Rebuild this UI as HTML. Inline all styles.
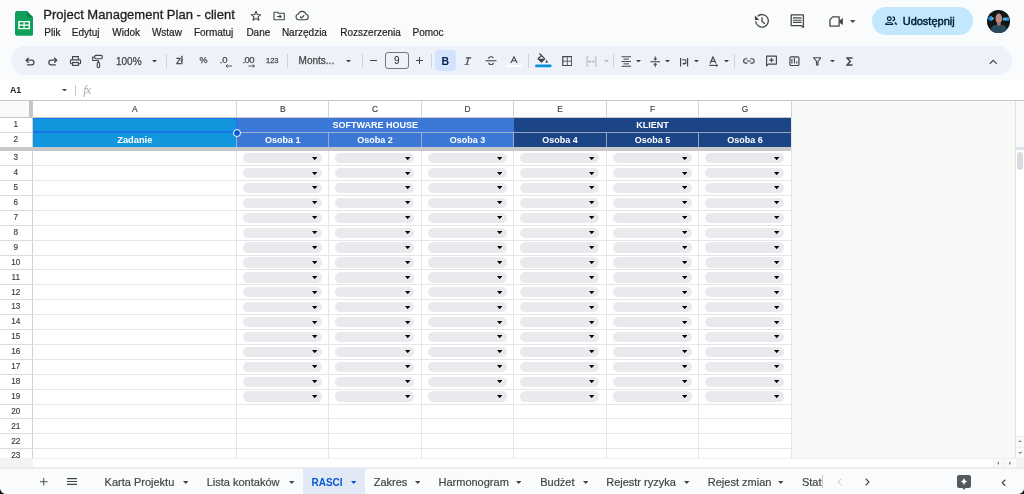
<!DOCTYPE html><html><head><meta charset="utf-8"><style>html,body{margin:0;padding:0;background:#f9fbfd;overflow:hidden;width:1024px;height:494px;}#r{will-change:transform;position:absolute;left:0;top:0;width:1024px;height:494px;overflow:hidden;background:#f9fbfd;}</style></head><body><div id="r">
<svg style="position:absolute;left:15.00px;top:11.00px;" width="18.2" height="24.8" viewBox="0 0 18.2 24.8"><path d="M2 0H11.8L18.2 6.4V22.8A2 2 0 0 1 16.2 24.8H2A2 2 0 0 1 0 22.8V2A2 2 0 0 1 2 0Z" fill="#0fa15a"/><path d="M11.8 0L18.2 6.4H13.8A2 2 0 0 1 11.8 4.4Z" fill="#0b8043"/><path d="M3.2 10H15V18.2H3.2Z" fill="#fff"/><path d="M4.6 11.3H8.5V13.5H4.6ZM9.7 11.3H13.6V13.5H9.7ZM4.6 14.7H8.5V16.9H4.6ZM9.7 14.7H13.6V16.9H9.7Z" fill="#0fa15a"/></svg>
<div style="position:absolute;left:43.30px;top:7.90px;font:normal 13px/13px 'Liberation Sans', sans-serif;color:#1f1f1f;white-space:nowrap;-webkit-text-stroke:0.3px #1f1f1f;">Project Management Plan - client</div>
<svg style="position:absolute;left:250.00px;top:10.00px;" width="12" height="11.5" viewBox="0 0 24 23"><path d="M12 2.5l2.6 6.4 6.9.5-5.3 4.4 1.7 6.7L12 16.8l-5.9 3.7 1.7-6.7L2.5 9.4l6.9-.5Z" fill="none" stroke="#444746" stroke-width="2.2" stroke-linejoin="round"/></svg>
<svg style="position:absolute;left:272.50px;top:10.50px;" width="12.5" height="10" viewBox="0 0 25 20"><path d="M2 2.5h7l2 2h11.5v13H2Z" fill="none" stroke="#444746" stroke-width="2.2" stroke-linejoin="round"/><path d="M8 11h8M13 7.8l3.2 3.2L13 14.2" fill="none" stroke="#444746" stroke-width="2.2"/></svg>
<svg style="position:absolute;left:294.50px;top:10.00px;" width="14" height="10.5" viewBox="0 0 28 21"><path d="M7.5 19.5A5.8 5.8 0 0 1 6.8 8 8 8 0 0 1 22 8.6 5.5 5.5 0 0 1 21.5 19.5Z" fill="none" stroke="#444746" stroke-width="2.2" stroke-linejoin="round"/><path d="M10 13l3 3 5.5-5.5" fill="none" stroke="#444746" stroke-width="2.2"/></svg>
<div style="position:absolute;left:44.30px;top:28.14px;font:normal 10px/10px 'Liberation Sans', sans-serif;color:#1f1f1f;white-space:nowrap;-webkit-text-stroke:0.2px #1f1f1f;">Plik</div>
<div style="position:absolute;left:71.80px;top:28.14px;font:normal 10px/10px 'Liberation Sans', sans-serif;color:#1f1f1f;white-space:nowrap;-webkit-text-stroke:0.2px #1f1f1f;">Edytuj</div>
<div style="position:absolute;left:112.30px;top:28.14px;font:normal 10px/10px 'Liberation Sans', sans-serif;color:#1f1f1f;white-space:nowrap;-webkit-text-stroke:0.2px #1f1f1f;">Widok</div>
<div style="position:absolute;left:151.90px;top:28.14px;font:normal 10px/10px 'Liberation Sans', sans-serif;color:#1f1f1f;white-space:nowrap;-webkit-text-stroke:0.2px #1f1f1f;">Wstaw</div>
<div style="position:absolute;left:193.90px;top:28.14px;font:normal 10px/10px 'Liberation Sans', sans-serif;color:#1f1f1f;white-space:nowrap;-webkit-text-stroke:0.2px #1f1f1f;">Formatuj</div>
<div style="position:absolute;left:246.40px;top:28.14px;font:normal 10px/10px 'Liberation Sans', sans-serif;color:#1f1f1f;white-space:nowrap;-webkit-text-stroke:0.2px #1f1f1f;">Dane</div>
<div style="position:absolute;left:281.90px;top:28.14px;font:normal 10px/10px 'Liberation Sans', sans-serif;color:#1f1f1f;white-space:nowrap;-webkit-text-stroke:0.2px #1f1f1f;">Narzędzia</div>
<div style="position:absolute;left:340.30px;top:28.14px;font:normal 10px/10px 'Liberation Sans', sans-serif;color:#1f1f1f;white-space:nowrap;-webkit-text-stroke:0.2px #1f1f1f;">Rozszerzenia</div>
<div style="position:absolute;left:412.50px;top:28.14px;font:normal 10px/10px 'Liberation Sans', sans-serif;color:#1f1f1f;white-space:nowrap;-webkit-text-stroke:0.2px #1f1f1f;">Pomoc</div>
<svg style="position:absolute;left:750.00px;top:10.00px;" width="22" height="22" viewBox="0 0 22 22"><path d="M7.55 6.35A6.3 6.3 0 1 1 5.72 11.35" fill="none" stroke="#444746" stroke-width="1.3"/><path d="M4.9 5.6V10H9.3Z" fill="#444746"/><path d="M12 7.3V11.4L15 13.8" fill="none" stroke="#444746" stroke-width="1.3"/></svg>
<svg style="position:absolute;left:789.00px;top:13.00px;" width="17" height="16" viewBox="0 0 17 16"><path d="M2.2 1.9H14.4V14.4L12.2 12.6H2.2Z" fill="none" stroke="#444746" stroke-width="1.3" stroke-linejoin="round"/><path d="M4 4.9H12.6M4 7.2H12.6M4 9.4H12.6" stroke="#444746" stroke-width="1.1"/></svg>
<svg style="position:absolute;left:822.00px;top:10.00px;" width="24" height="22" viewBox="0 0 24 22"><path d="M10.7 6.85H17.15V16.05H7.95V9.6Z" fill="none" stroke="#444746" stroke-width="1.3" stroke-linejoin="round"/><path d="M17.5 10.4L20.9 8.1V15L17.5 12.7Z" fill="#444746"/></svg>
<svg style="position:absolute;left:850.45px;top:19.90px;" width="5.5" height="3" viewBox="0 0 5.5 3"><path d="M0 0H5.5L2.75 3Z" fill="#444746"/></svg>
<div style="position:absolute;left:872.00px;top:7.00px;width:101.00px;height:28.20px;background:#c2e7ff;border-radius:14px;"></div>
<svg style="position:absolute;left:883.00px;top:14.00px;" width="15" height="12" viewBox="0 0 15 12"><circle cx="6.3" cy="4.74" r="1.9" fill="none" stroke="#001d35" stroke-width="1.15"/><path d="M9.6 2.8A1.95 1.95 0 0 1 9.6 6.7" fill="none" stroke="#001d35" stroke-width="1.3"/><path d="M2.4 10.45V10.1Q2.4 8.65 6.2 8.65Q10 8.65 10 10.1V10.45Z" fill="none" stroke="#001d35" stroke-width="1.0" stroke-linejoin="round"/><path d="M11.7 8.75Q13.2 9.1 13.2 10.2V10.9" fill="none" stroke="#001d35" stroke-width="1.3"/></svg>
<div style="position:absolute;left:902.70px;top:15.69px;font:normal 11px/11px 'Liberation Sans', sans-serif;color:#001d35;white-space:nowrap;-webkit-text-stroke:0.45px #001d35;">Udostępnij</div>
<svg style="position:absolute;left:987.00px;top:9.80px;" width="23" height="23" viewBox="0 0 46 46"><defs><clipPath id="ac"><circle cx="23" cy="23" r="23"/></clipPath></defs><g clip-path="url(#ac)"><rect width="46" height="46" fill="#141516"/><path d="M1.5 17L7.5 11.5 13.5 17 7.5 22.5Z" fill="#1a8fe3"/><path d="M9 13.5L12.5 17 9 20.5" fill="none" stroke="#e8f2fa" stroke-width="1.6"/><path d="M31.5 15.5Q38 13.5 44.5 15V21Q38 22.5 31.5 20.5Z" fill="#2a8fd8"/><path d="M33 16.5h5v3h-5Z" fill="#cfd8de" opacity=".6"/><path d="M5 46Q7 32 16 29.5L23.5 32 31 29.5Q40 32 42 46Z" fill="#264c5e"/><ellipse cx="23.6" cy="17" rx="6.6" ry="9.8" fill="#b98b80"/><path d="M20 25h7.5v5l-3.7 2-3.8-2Z" fill="#a57a6e"/></g></svg>
<div style="position:absolute;left:11.00px;top:46.00px;width:1001.30px;height:29.00px;background:#edf2fa;border-radius:14.5px;"></div>
<svg style="position:absolute;left:20.00px;top:50.00px;" width="42" height="22" viewBox="0 0 42 22"><path d="M8.6 7.7L6.1 10.2 8.6 12.7M6.4 10.2H11.6A2.35 2.35 0 0 1 11.6 14.9H7" fill="none" stroke="#444746" stroke-width="1.25"/><path d="M34.2 7.7L36.7 10.2 34.2 12.7M36.4 10.2H31.2A2.35 2.35 0 0 0 31.2 14.9H35.8" fill="none" stroke="#444746" stroke-width="1.25"/></svg>
<svg style="position:absolute;left:69.00px;top:55.00px;" width="13" height="12" viewBox="0 0 13 12"><path d="M3.6 4.6V1.6H9.4V4.6" fill="none" stroke="#444746" stroke-width="1.15"/><rect x="1.5" y="4.8" width="10.1" height="3.9" rx="0.8" fill="none" stroke="#444746" stroke-width="1.15"/><rect x="3.6" y="7.5" width="5.8" height="2.9" fill="#edf2fa" stroke="#444746" stroke-width="1.15"/></svg>
<svg style="position:absolute;left:91.00px;top:54.00px;" width="13" height="15" viewBox="0 0 13 15"><rect x="3.8" y="1.3" width="7.4" height="3.4" rx="1" fill="none" stroke="#444746" stroke-width="1.15"/><path d="M3.8 3H1.7V6.5H7.4V8.4" fill="none" stroke="#444746" stroke-width="1.1"/><rect x="6.2" y="8.4" width="2.4" height="5.2" rx="1.2" fill="none" stroke="#444746" stroke-width="1.1"/></svg>
<div style="position:absolute;left:116.00px;top:56.63px;font:normal 10px/10px 'Liberation Sans', sans-serif;color:#444746;white-space:nowrap;-webkit-text-stroke:0.25px #444746;">100%</div>
<svg style="position:absolute;left:151.80px;top:59.50px;" width="5" height="2.6" viewBox="0 0 5 2.6"><path d="M0 0H5L2.5 2.6Z" fill="#444746"/></svg>
<div style="position:absolute;left:166.00px;top:53.50px;width:1.00px;height:14.00px;background:#d0d2d4;"></div>
<div style="position:absolute;left:176.00px;top:55.53px;font:normal 10px/10px 'Liberation Sans', sans-serif;color:#444746;white-space:nowrap;-webkit-text-stroke:0.3px #444746;letter-spacing:-0.3px;">zł</div>
<div style="position:absolute;left:199.50px;top:56.28px;font:normal 9px/9px 'Liberation Sans', sans-serif;color:#444746;white-space:nowrap;-webkit-text-stroke:0.25px #444746;">%</div>
<div style="position:absolute;left:219.80px;top:55.36px;font:normal 9.5px/9.5px 'Liberation Sans', sans-serif;color:#444746;white-space:nowrap;letter-spacing:-0.3px;-webkit-text-stroke:0.25px #444746;">.0</div>
<svg style="position:absolute;left:225.00px;top:63.50px;" width="7.5" height="4" viewBox="0 0 15 8"><path d="M14 4H2M5.5 0.8L2 4l3.5 3.2" fill="none" stroke="#444746" stroke-width="1.8"/></svg>
<div style="position:absolute;left:242.50px;top:55.36px;font:normal 9.5px/9.5px 'Liberation Sans', sans-serif;color:#444746;white-space:nowrap;letter-spacing:-0.6px;-webkit-text-stroke:0.25px #444746;">.00</div>
<svg style="position:absolute;left:248.00px;top:63.50px;" width="7.5" height="4" viewBox="0 0 15 8"><path d="M1 4H13M9.5 0.8L13 4l-3.5 3.2" fill="none" stroke="#444746" stroke-width="1.8"/></svg>
<div style="position:absolute;left:266.00px;top:57.25px;font:normal 7.5px/7.5px 'Liberation Sans', sans-serif;color:#444746;white-space:nowrap;-webkit-text-stroke:0.25px #444746;">123</div>
<div style="position:absolute;left:287.00px;top:53.50px;width:1.00px;height:14.00px;background:#d0d2d4;"></div>
<div style="position:absolute;left:298.60px;top:56.33px;font:normal 10px/10px 'Liberation Sans', sans-serif;color:#444746;white-space:nowrap;-webkit-text-stroke:0.25px #444746;">Monts...</div>
<svg style="position:absolute;left:346.00px;top:59.50px;" width="5" height="2.6" viewBox="0 0 5 2.6"><path d="M0 0H5L2.5 2.6Z" fill="#444746"/></svg>
<div style="position:absolute;left:362.00px;top:53.50px;width:1.00px;height:14.00px;background:#d0d2d4;"></div>
<div style="position:absolute;left:370.00px;top:60.00px;width:7.20px;height:1.20px;background:#444746;"></div>
<div style="position:absolute;left:384.8px;top:52.2px;width:22px;height:14.5px;border:1px solid #747775;border-radius:3px;"></div>
<div style="position:absolute;left:386.80px;top:56.33px;width:20px;text-align:center;font:normal 10px/10px 'Liberation Sans', sans-serif;color:#1f1f1f;white-space:nowrap;">9</div>
<div style="position:absolute;left:415.80px;top:60.00px;width:7.00px;height:1.20px;background:#444746;"></div>
<div style="position:absolute;left:418.70px;top:57.00px;width:1.20px;height:7.20px;background:#444746;"></div>
<div style="position:absolute;left:431.00px;top:53.50px;width:1.00px;height:14.00px;background:#d0d2d4;"></div>
<div style="position:absolute;left:434.70px;top:49.80px;width:21.10px;height:21.10px;background:#d3e3fd;border-radius:4px;"></div>
<div style="position:absolute;left:441.50px;top:55.91px;font:bold 10.5px/10.5px 'Liberation Sans', sans-serif;color:#041e49;white-space:nowrap;">B</div>
<svg style="position:absolute;left:462.90px;top:56.50px;" width="9.2" height="8.8" viewBox="0 0 19 18"><path d="M6 1.5H17M2 16.5H13M11.5 1.5L7.5 16.5" fill="none" stroke="#444746" stroke-width="2.5"/></svg>
<svg style="position:absolute;left:484.50px;top:55.80px;" width="12" height="9.5" viewBox="0 0 24 19"><path d="M1 9.5H23" stroke="#444746" stroke-width="2.2"/><path d="M17 4Q15 1.5 12 1.5Q7.5 1.5 7.5 5.5" fill="none" stroke="#444746" stroke-width="2.4"/><path d="M7.5 13.5Q8.5 17.5 12 17.5Q16.5 17.5 16.5 13.5" fill="none" stroke="#444746" stroke-width="2.4"/></svg>
<svg style="position:absolute;left:510.00px;top:55.80px;" width="8" height="7.5" viewBox="0 0 16 15"><path d="M1.5 14.5L8 1.5l6.5 13M4.2 9.5H11.8" fill="none" stroke="#444746" stroke-width="2.2"/></svg>
<div style="position:absolute;left:505.80px;top:65.10px;width:16.40px;height:2.30px;background:#ffffff;"></div>
<div style="position:absolute;left:528.00px;top:53.50px;width:1.00px;height:14.00px;background:#d0d2d4;"></div>
<svg style="position:absolute;left:530.00px;top:50.00px;" width="25" height="22" viewBox="0 0 25 22"><path d="M8.05 8.8L11.5 5.5 14.8 8.8 11.5 12Z" fill="none" stroke="#444746" stroke-width="1.2" stroke-linejoin="round"/><path d="M9.3 3.3L11.5 5.5" stroke="#444746" stroke-width="1.2"/><path d="M8.05 8.8H14.8L11.5 12Z" fill="#444746"/><path d="M16.6 10.1Q17.6 11.3 17.6 12A1 1 0 0 1 15.6 12Q15.6 11.3 16.6 10.1Z" fill="#444746"/><rect x="5.1" y="14.6" width="16.4" height="2.7" rx="1" fill="#0b8fde"/></svg>
<svg style="position:absolute;left:561.80px;top:55.80px;" width="10.6" height="10.4" viewBox="0 0 22 22"><path d="M1.5 1.5H20.5V20.5H1.5Z" fill="none" stroke="#444746" stroke-width="2.6"/><path d="M11 1.5V20.5M1.5 11H20.5" stroke="#444746" stroke-width="1.8"/></svg>
<svg style="position:absolute;left:585.50px;top:55.50px;" width="11" height="11" viewBox="0 0 22 22"><path d="M5 2H2V20H5M17 2H20V20H17" fill="none" stroke="#b9bcc1" stroke-width="2.2"/><path d="M3 11H9M6.5 8l3 3-3 3M19 11H13M15.5 8l-3 3 3 3" fill="none" stroke="#b9bcc1" stroke-width="2"/></svg>
<svg style="position:absolute;left:603.50px;top:59.50px;" width="5" height="2.6" viewBox="0 0 5 2.6"><path d="M0 0H5L2.5 2.6Z" fill="#b9bcc1"/></svg>
<div style="position:absolute;left:613.00px;top:53.50px;width:1.00px;height:14.00px;background:#d0d2d4;"></div>
<svg style="position:absolute;left:620.50px;top:55.50px;" width="10.5" height="11" viewBox="0 0 21 22"><path d="M1 1.5H20M5 6.25H16M1 11H20M5 15.75H16M1 20.5H20" stroke="#444746" stroke-width="2"/></svg>
<svg style="position:absolute;left:636.10px;top:59.50px;" width="5" height="2.6" viewBox="0 0 5 2.6"><path d="M0 0H5L2.5 2.6Z" fill="#444746"/></svg>
<svg style="position:absolute;left:649.50px;top:55.50px;" width="10.5" height="11.5" viewBox="0 0 21 23"><path d="M1 11.5H20" stroke="#444746" stroke-width="2.2"/><path d="M10.5 1v6.5M7.5 5l3 3 3-3M10.5 22v-6.5M7.5 18l3-3 3 3" fill="none" stroke="#444746" stroke-width="2.1"/></svg>
<svg style="position:absolute;left:665.20px;top:59.50px;" width="5" height="2.6" viewBox="0 0 5 2.6"><path d="M0 0H5L2.5 2.6Z" fill="#444746"/></svg>
<svg style="position:absolute;left:675.00px;top:50.60px;" width="45" height="22" viewBox="0 0 45 22"><path d="M5.6 7V15.5M12.6 7V15.5" stroke="#444746" stroke-width="1.15"/><path d="M7 8.8H10.1Q10.9 8.8 10.9 9.7V11.9Q10.9 12.6 10.1 12.6H8.6" fill="none" stroke="#444746" stroke-width="1.1"/><path d="M9.2 11.2L7.3 12.6 9.2 14Z" fill="#444746"/><path d="M35 12.6L38 5.9 41 12.6M36.1 10.3H39.9" fill="none" stroke="#444746" stroke-width="1.15"/><path d="M34.2 14.4H42.4" stroke="#444746" stroke-width="1.1"/><path d="M41.2 12.9L43.2 14.4 41.2 15.9Z" fill="#444746"/></svg>
<svg style="position:absolute;left:694.10px;top:59.70px;" width="5" height="2.6" viewBox="0 0 5 2.6"><path d="M0 0H5L2.5 2.6Z" fill="#444746"/></svg>
<svg style="position:absolute;left:723.60px;top:59.70px;" width="5" height="2.6" viewBox="0 0 5 2.6"><path d="M0 0H5L2.5 2.6Z" fill="#444746"/></svg>
<div style="position:absolute;left:734.20px;top:53.50px;width:1.00px;height:14.00px;background:#d0d2d4;"></div>
<svg style="position:absolute;left:738.00px;top:50.00px;" width="70" height="22" viewBox="0 0 70 22"><path d="M9.4 8.75H7.85A2.2 2.2 0 0 0 7.85 13.15H9.4M12.4 8.75H13.95A2.2 2.2 0 0 1 13.95 13.15H12.4M8.9 10.95H12.9" fill="none" stroke="#444746" stroke-width="1.15"/><path d="M28.6 15.9V6.1H38.4V14.1H30.4Z" fill="none" stroke="#444746" stroke-width="1.15" stroke-linejoin="round"/><path d="M33.5 7.9V12.3M31.3 10.1H35.7" stroke="#444746" stroke-width="1.25"/><rect x="51.95" y="6.85" width="9" height="8.6" rx="1" fill="none" stroke="#444746" stroke-width="1.15"/><path d="M53.9 9V13.4M56.4 7.8V13.4M58.8 11.3V13.4" stroke="#444746" stroke-width="1.1"/></svg>
<svg style="position:absolute;left:812.50px;top:57.00px;" width="8.5" height="8.5" viewBox="0 0 17 17"><path d="M1 1.5H16L10 8.5V16H7V8.5Z" fill="none" stroke="#444746" stroke-width="2.3" stroke-linejoin="round"/></svg>
<svg style="position:absolute;left:829.50px;top:59.50px;" width="5" height="2.6" viewBox="0 0 5 2.6"><path d="M0 0H5L2.5 2.6Z" fill="#444746"/></svg>
<svg style="position:absolute;left:845.50px;top:56.50px;" width="7" height="9" viewBox="0 0 14 18"><path d="M13 2H2L8.5 9 2 16H13" fill="none" stroke="#444746" stroke-width="3" stroke-linejoin="miter"/></svg>
<svg style="position:absolute;left:988.50px;top:58.50px;" width="8.5" height="5.5" viewBox="0 0 17 11"><path d="M1.5 9.5L8.5 2.5l7 7" fill="none" stroke="#444746" stroke-width="2.4"/></svg>
<div style="position:absolute;left:0.00px;top:80.00px;width:1024.00px;height:20.00px;background:#ffffff;"></div>
<div style="position:absolute;left:0.00px;top:100.00px;width:1024.00px;height:1.00px;background:#c7c7c7;"></div>
<div style="position:absolute;left:10.00px;top:85.75px;font:bold 8.8px/8.8px 'Liberation Sans', sans-serif;color:#1f1f1f;white-space:nowrap;">A1</div>
<svg style="position:absolute;left:61.50px;top:88.90px;" width="5" height="2.6" viewBox="0 0 5 2.6"><path d="M0 0H5L2.5 2.6Z" fill="#444746"/></svg>
<div style="position:absolute;left:75.20px;top:84.80px;width:1.00px;height:11.70px;background:#c7c7c7;"></div>
<div style="position:absolute;left:83.30px;top:84.04px;font:normal 12px/12px 'Liberation Serif', serif;color:#a8abae;white-space:nowrap;font-style:italic;letter-spacing:-0.8px;">fx</div>
<div style="position:absolute;left:0.00px;top:101.00px;width:1015.30px;height:357.40px;background:#ffffff;"></div>
<div style="position:absolute;left:791.20px;top:101.00px;width:224.10px;height:357.40px;background:#f7f9f6;"></div>
<div style="position:absolute;left:0.00px;top:101.00px;width:29.20px;height:16.00px;background:#f8f9fa;"></div>
<div style="position:absolute;left:29.20px;top:101.00px;width:3.80px;height:16.00px;background:#c4c7c5;"></div>
<div style="position:absolute;left:114.80px;top:104.79px;width:40px;text-align:center;font:normal 8.4px/8.4px 'Liberation Sans', sans-serif;color:#3c4043;white-space:nowrap;-webkit-text-stroke:0.15px #3c4043;">A</div>
<div style="position:absolute;left:262.75px;top:104.79px;width:40px;text-align:center;font:normal 8.4px/8.4px 'Liberation Sans', sans-serif;color:#3c4043;white-space:nowrap;-webkit-text-stroke:0.15px #3c4043;">B</div>
<div style="position:absolute;left:355.10px;top:104.79px;width:40px;text-align:center;font:normal 8.4px/8.4px 'Liberation Sans', sans-serif;color:#3c4043;white-space:nowrap;-webkit-text-stroke:0.15px #3c4043;">C</div>
<div style="position:absolute;left:447.55px;top:104.79px;width:40px;text-align:center;font:normal 8.4px/8.4px 'Liberation Sans', sans-serif;color:#3c4043;white-space:nowrap;-webkit-text-stroke:0.15px #3c4043;">D</div>
<div style="position:absolute;left:540.00px;top:104.79px;width:40px;text-align:center;font:normal 8.4px/8.4px 'Liberation Sans', sans-serif;color:#3c4043;white-space:nowrap;-webkit-text-stroke:0.15px #3c4043;">E</div>
<div style="position:absolute;left:632.45px;top:104.79px;width:40px;text-align:center;font:normal 8.4px/8.4px 'Liberation Sans', sans-serif;color:#3c4043;white-space:nowrap;-webkit-text-stroke:0.15px #3c4043;">F</div>
<div style="position:absolute;left:724.95px;top:104.79px;width:40px;text-align:center;font:normal 8.4px/8.4px 'Liberation Sans', sans-serif;color:#3c4043;white-space:nowrap;-webkit-text-stroke:0.15px #3c4043;">G</div>
<div style="position:absolute;left:236.10px;top:101.00px;width:1.00px;height:16.00px;background:#d3d4d4;"></div>
<div style="position:absolute;left:328.40px;top:101.00px;width:1.00px;height:16.00px;background:#d3d4d4;"></div>
<div style="position:absolute;left:420.80px;top:101.00px;width:1.00px;height:16.00px;background:#d3d4d4;"></div>
<div style="position:absolute;left:513.30px;top:101.00px;width:1.00px;height:16.00px;background:#d3d4d4;"></div>
<div style="position:absolute;left:605.70px;top:101.00px;width:1.00px;height:16.00px;background:#d3d4d4;"></div>
<div style="position:absolute;left:698.20px;top:101.00px;width:1.00px;height:16.00px;background:#d3d4d4;"></div>
<div style="position:absolute;left:790.70px;top:101.00px;width:1.00px;height:16.00px;background:#d3d4d4;"></div>
<div style="position:absolute;left:0.00px;top:116.80px;width:791.20px;height:0.90px;background:#c7c7c7;"></div>
<div style="position:absolute;left:32.40px;top:117.00px;width:0.80px;height:341.40px;background:#d0d1d1;"></div>
<div style="position:absolute;left:0.00px;top:165.10px;width:32.60px;height:1.00px;background:#dadce0;"></div>
<div style="position:absolute;left:33.00px;top:165.10px;width:758.20px;height:1.00px;background:#e5e6e6;"></div>
<div style="position:absolute;left:0.00px;top:180.00px;width:32.60px;height:1.00px;background:#dadce0;"></div>
<div style="position:absolute;left:33.00px;top:180.00px;width:758.20px;height:1.00px;background:#e5e6e6;"></div>
<div style="position:absolute;left:0.00px;top:194.90px;width:32.60px;height:1.00px;background:#dadce0;"></div>
<div style="position:absolute;left:33.00px;top:194.90px;width:758.20px;height:1.00px;background:#e5e6e6;"></div>
<div style="position:absolute;left:0.00px;top:209.80px;width:32.60px;height:1.00px;background:#dadce0;"></div>
<div style="position:absolute;left:33.00px;top:209.80px;width:758.20px;height:1.00px;background:#e5e6e6;"></div>
<div style="position:absolute;left:0.00px;top:224.70px;width:32.60px;height:1.00px;background:#dadce0;"></div>
<div style="position:absolute;left:33.00px;top:224.70px;width:758.20px;height:1.00px;background:#e5e6e6;"></div>
<div style="position:absolute;left:0.00px;top:239.60px;width:32.60px;height:1.00px;background:#dadce0;"></div>
<div style="position:absolute;left:33.00px;top:239.60px;width:758.20px;height:1.00px;background:#e5e6e6;"></div>
<div style="position:absolute;left:0.00px;top:254.50px;width:32.60px;height:1.00px;background:#dadce0;"></div>
<div style="position:absolute;left:33.00px;top:254.50px;width:758.20px;height:1.00px;background:#e5e6e6;"></div>
<div style="position:absolute;left:0.00px;top:269.40px;width:32.60px;height:1.00px;background:#dadce0;"></div>
<div style="position:absolute;left:33.00px;top:269.40px;width:758.20px;height:1.00px;background:#e5e6e6;"></div>
<div style="position:absolute;left:0.00px;top:284.30px;width:32.60px;height:1.00px;background:#dadce0;"></div>
<div style="position:absolute;left:33.00px;top:284.30px;width:758.20px;height:1.00px;background:#e5e6e6;"></div>
<div style="position:absolute;left:0.00px;top:299.20px;width:32.60px;height:1.00px;background:#dadce0;"></div>
<div style="position:absolute;left:33.00px;top:299.20px;width:758.20px;height:1.00px;background:#e5e6e6;"></div>
<div style="position:absolute;left:0.00px;top:314.10px;width:32.60px;height:1.00px;background:#dadce0;"></div>
<div style="position:absolute;left:33.00px;top:314.10px;width:758.20px;height:1.00px;background:#e5e6e6;"></div>
<div style="position:absolute;left:0.00px;top:329.00px;width:32.60px;height:1.00px;background:#dadce0;"></div>
<div style="position:absolute;left:33.00px;top:329.00px;width:758.20px;height:1.00px;background:#e5e6e6;"></div>
<div style="position:absolute;left:0.00px;top:343.90px;width:32.60px;height:1.00px;background:#dadce0;"></div>
<div style="position:absolute;left:33.00px;top:343.90px;width:758.20px;height:1.00px;background:#e5e6e6;"></div>
<div style="position:absolute;left:0.00px;top:358.80px;width:32.60px;height:1.00px;background:#dadce0;"></div>
<div style="position:absolute;left:33.00px;top:358.80px;width:758.20px;height:1.00px;background:#e5e6e6;"></div>
<div style="position:absolute;left:0.00px;top:373.70px;width:32.60px;height:1.00px;background:#dadce0;"></div>
<div style="position:absolute;left:33.00px;top:373.70px;width:758.20px;height:1.00px;background:#e5e6e6;"></div>
<div style="position:absolute;left:0.00px;top:388.60px;width:32.60px;height:1.00px;background:#dadce0;"></div>
<div style="position:absolute;left:33.00px;top:388.60px;width:758.20px;height:1.00px;background:#e5e6e6;"></div>
<div style="position:absolute;left:0.00px;top:403.50px;width:32.60px;height:1.00px;background:#dadce0;"></div>
<div style="position:absolute;left:33.00px;top:403.50px;width:758.20px;height:1.00px;background:#e5e6e6;"></div>
<div style="position:absolute;left:0.00px;top:418.40px;width:32.60px;height:1.00px;background:#dadce0;"></div>
<div style="position:absolute;left:33.00px;top:418.40px;width:758.20px;height:1.00px;background:#e5e6e6;"></div>
<div style="position:absolute;left:0.00px;top:433.30px;width:32.60px;height:1.00px;background:#dadce0;"></div>
<div style="position:absolute;left:33.00px;top:433.30px;width:758.20px;height:1.00px;background:#e5e6e6;"></div>
<div style="position:absolute;left:0.00px;top:448.20px;width:32.60px;height:1.00px;background:#dadce0;"></div>
<div style="position:absolute;left:33.00px;top:448.20px;width:758.20px;height:1.00px;background:#e5e6e6;"></div>
<div style="position:absolute;left:236.10px;top:150.70px;width:1.00px;height:307.70px;background:#e5e6e6;"></div>
<div style="position:absolute;left:328.40px;top:150.70px;width:1.00px;height:307.70px;background:#e5e6e6;"></div>
<div style="position:absolute;left:420.80px;top:150.70px;width:1.00px;height:307.70px;background:#e5e6e6;"></div>
<div style="position:absolute;left:513.30px;top:150.70px;width:1.00px;height:307.70px;background:#e5e6e6;"></div>
<div style="position:absolute;left:605.70px;top:150.70px;width:1.00px;height:307.70px;background:#e5e6e6;"></div>
<div style="position:absolute;left:698.20px;top:150.70px;width:1.00px;height:307.70px;background:#e5e6e6;"></div>
<div style="position:absolute;left:790.70px;top:117.00px;width:1.00px;height:341.40px;background:#e5e6e6;"></div>
<div style="position:absolute;left:0.80px;top:120.96px;width:30px;text-align:center;font:normal 8.2px/8.2px 'Liberation Sans', sans-serif;color:#3c4043;white-space:nowrap;-webkit-text-stroke:0.15px #3c4043;">1</div>
<div style="position:absolute;left:0.80px;top:135.76px;width:30px;text-align:center;font:normal 8.2px/8.2px 'Liberation Sans', sans-serif;color:#3c4043;white-space:nowrap;-webkit-text-stroke:0.15px #3c4043;">2</div>
<div style="position:absolute;left:0.80px;top:154.46px;width:30px;text-align:center;font:normal 8.2px/8.2px 'Liberation Sans', sans-serif;color:#3c4043;white-space:nowrap;-webkit-text-stroke:0.15px #3c4043;">3</div>
<div style="position:absolute;left:0.80px;top:169.36px;width:30px;text-align:center;font:normal 8.2px/8.2px 'Liberation Sans', sans-serif;color:#3c4043;white-space:nowrap;-webkit-text-stroke:0.15px #3c4043;">4</div>
<div style="position:absolute;left:0.80px;top:184.26px;width:30px;text-align:center;font:normal 8.2px/8.2px 'Liberation Sans', sans-serif;color:#3c4043;white-space:nowrap;-webkit-text-stroke:0.15px #3c4043;">5</div>
<div style="position:absolute;left:0.80px;top:199.16px;width:30px;text-align:center;font:normal 8.2px/8.2px 'Liberation Sans', sans-serif;color:#3c4043;white-space:nowrap;-webkit-text-stroke:0.15px #3c4043;">6</div>
<div style="position:absolute;left:0.80px;top:214.06px;width:30px;text-align:center;font:normal 8.2px/8.2px 'Liberation Sans', sans-serif;color:#3c4043;white-space:nowrap;-webkit-text-stroke:0.15px #3c4043;">7</div>
<div style="position:absolute;left:0.80px;top:228.96px;width:30px;text-align:center;font:normal 8.2px/8.2px 'Liberation Sans', sans-serif;color:#3c4043;white-space:nowrap;-webkit-text-stroke:0.15px #3c4043;">8</div>
<div style="position:absolute;left:0.80px;top:243.86px;width:30px;text-align:center;font:normal 8.2px/8.2px 'Liberation Sans', sans-serif;color:#3c4043;white-space:nowrap;-webkit-text-stroke:0.15px #3c4043;">9</div>
<div style="position:absolute;left:0.80px;top:258.76px;width:30px;text-align:center;font:normal 8.2px/8.2px 'Liberation Sans', sans-serif;color:#3c4043;white-space:nowrap;-webkit-text-stroke:0.15px #3c4043;">10</div>
<div style="position:absolute;left:0.80px;top:273.66px;width:30px;text-align:center;font:normal 8.2px/8.2px 'Liberation Sans', sans-serif;color:#3c4043;white-space:nowrap;-webkit-text-stroke:0.15px #3c4043;">11</div>
<div style="position:absolute;left:0.80px;top:288.56px;width:30px;text-align:center;font:normal 8.2px/8.2px 'Liberation Sans', sans-serif;color:#3c4043;white-space:nowrap;-webkit-text-stroke:0.15px #3c4043;">12</div>
<div style="position:absolute;left:0.80px;top:303.46px;width:30px;text-align:center;font:normal 8.2px/8.2px 'Liberation Sans', sans-serif;color:#3c4043;white-space:nowrap;-webkit-text-stroke:0.15px #3c4043;">13</div>
<div style="position:absolute;left:0.80px;top:318.36px;width:30px;text-align:center;font:normal 8.2px/8.2px 'Liberation Sans', sans-serif;color:#3c4043;white-space:nowrap;-webkit-text-stroke:0.15px #3c4043;">14</div>
<div style="position:absolute;left:0.80px;top:333.26px;width:30px;text-align:center;font:normal 8.2px/8.2px 'Liberation Sans', sans-serif;color:#3c4043;white-space:nowrap;-webkit-text-stroke:0.15px #3c4043;">15</div>
<div style="position:absolute;left:0.80px;top:348.16px;width:30px;text-align:center;font:normal 8.2px/8.2px 'Liberation Sans', sans-serif;color:#3c4043;white-space:nowrap;-webkit-text-stroke:0.15px #3c4043;">16</div>
<div style="position:absolute;left:0.80px;top:363.06px;width:30px;text-align:center;font:normal 8.2px/8.2px 'Liberation Sans', sans-serif;color:#3c4043;white-space:nowrap;-webkit-text-stroke:0.15px #3c4043;">17</div>
<div style="position:absolute;left:0.80px;top:377.96px;width:30px;text-align:center;font:normal 8.2px/8.2px 'Liberation Sans', sans-serif;color:#3c4043;white-space:nowrap;-webkit-text-stroke:0.15px #3c4043;">18</div>
<div style="position:absolute;left:0.80px;top:392.86px;width:30px;text-align:center;font:normal 8.2px/8.2px 'Liberation Sans', sans-serif;color:#3c4043;white-space:nowrap;-webkit-text-stroke:0.15px #3c4043;">19</div>
<div style="position:absolute;left:0.80px;top:407.76px;width:30px;text-align:center;font:normal 8.2px/8.2px 'Liberation Sans', sans-serif;color:#3c4043;white-space:nowrap;-webkit-text-stroke:0.15px #3c4043;">20</div>
<div style="position:absolute;left:0.80px;top:422.66px;width:30px;text-align:center;font:normal 8.2px/8.2px 'Liberation Sans', sans-serif;color:#3c4043;white-space:nowrap;-webkit-text-stroke:0.15px #3c4043;">21</div>
<div style="position:absolute;left:0.80px;top:437.56px;width:30px;text-align:center;font:normal 8.2px/8.2px 'Liberation Sans', sans-serif;color:#3c4043;white-space:nowrap;-webkit-text-stroke:0.15px #3c4043;">22</div>
<div style="position:absolute;left:0.80px;top:452.46px;width:30px;text-align:center;font:normal 8.2px/8.2px 'Liberation Sans', sans-serif;color:#3c4043;white-space:nowrap;-webkit-text-stroke:0.15px #3c4043;">23</div>
<div style="position:absolute;left:0.00px;top:131.70px;width:32.60px;height:1.00px;background:#dadce0;"></div>
<div style="position:absolute;left:33.00px;top:117.60px;width:203.60px;height:29.30px;background:#1297df;"></div>
<div style="position:absolute;left:236.60px;top:117.60px;width:277.20px;height:29.30px;background:#3c78d8;"></div>
<div style="position:absolute;left:513.80px;top:117.60px;width:277.40px;height:29.30px;background:#1c4587;"></div>
<div style="position:absolute;left:236.60px;top:132.10px;width:554.60px;height:1.00px;background:#b3bccb;opacity:.8;"></div>
<div style="position:absolute;left:236.10px;top:132.60px;width:1.00px;height:14.30px;background:#b3bccb;opacity:.8;"></div>
<div style="position:absolute;left:328.40px;top:132.60px;width:1.00px;height:14.30px;background:#b3bccb;opacity:.8;"></div>
<div style="position:absolute;left:420.80px;top:132.60px;width:1.00px;height:14.30px;background:#b3bccb;opacity:.8;"></div>
<div style="position:absolute;left:513.30px;top:132.60px;width:1.00px;height:14.30px;background:#b3bccb;opacity:.8;"></div>
<div style="position:absolute;left:605.70px;top:132.60px;width:1.00px;height:14.30px;background:#b3bccb;opacity:.8;"></div>
<div style="position:absolute;left:698.20px;top:132.60px;width:1.00px;height:14.30px;background:#b3bccb;opacity:.8;"></div>
<div style="position:absolute;left:275.20px;top:121.38px;width:200px;text-align:center;font:bold 9px/9px 'Liberation Sans', sans-serif;color:#ffffff;white-space:nowrap;">SOFTWARE HOUSE</div>
<div style="position:absolute;left:552.50px;top:121.38px;width:200px;text-align:center;font:bold 9px/9px 'Liberation Sans', sans-serif;color:#ffffff;white-space:nowrap;">KLIENT</div>
<div style="position:absolute;left:34.80px;top:135.73px;width:200px;text-align:center;font:bold 9.3px/9.3px 'Liberation Sans', sans-serif;color:#ffffff;white-space:nowrap;">Zadanie</div>
<div style="position:absolute;left:237.75px;top:135.98px;width:90px;text-align:center;font:bold 9px/9px 'Liberation Sans', sans-serif;color:#ffffff;white-space:nowrap;">Osoba 1</div>
<div style="position:absolute;left:330.10px;top:135.98px;width:90px;text-align:center;font:bold 9px/9px 'Liberation Sans', sans-serif;color:#ffffff;white-space:nowrap;">Osoba 2</div>
<div style="position:absolute;left:422.55px;top:135.98px;width:90px;text-align:center;font:bold 9px/9px 'Liberation Sans', sans-serif;color:#ffffff;white-space:nowrap;">Osoba 3</div>
<div style="position:absolute;left:515.00px;top:135.98px;width:90px;text-align:center;font:bold 9px/9px 'Liberation Sans', sans-serif;color:#ffffff;white-space:nowrap;">Osoba 4</div>
<div style="position:absolute;left:607.45px;top:135.98px;width:90px;text-align:center;font:bold 9px/9px 'Liberation Sans', sans-serif;color:#ffffff;white-space:nowrap;">Osoba 5</div>
<div style="position:absolute;left:699.95px;top:135.98px;width:90px;text-align:center;font:bold 9px/9px 'Liberation Sans', sans-serif;color:#ffffff;white-space:nowrap;">Osoba 6</div>
<div style="position:absolute;left:0.00px;top:146.90px;width:791.20px;height:3.80px;background:#c8c8c8;"></div>
<div style="position:absolute;left:33.00px;top:117.50px;width:204.40px;height:1.40px;background:#1a73e8;"></div>
<div style="position:absolute;left:33.00px;top:131.30px;width:204.40px;height:1.50px;background:#1a73e8;"></div>
<div style="position:absolute;left:235.60px;top:117.50px;width:1.60px;height:15.30px;background:#1a73e8;"></div>
<div style="position:absolute;left:232.6px;top:128.7px;width:8px;height:8px;box-sizing:border-box;border-radius:50%;background:#0b57d0;border:1.3px solid #fff;"></div>
<div style="position:absolute;left:243.00px;top:153.00px;width:79.00px;height:10.40px;background:#e8eaed;border-radius:5.2px;"></div>
<svg style="position:absolute;left:312.20px;top:156.60px;" width="5.4" height="3.2" viewBox="0 0 5.4 3.2"><path d="M0 0H5.4L2.7 3.2Z" fill="#000"/></svg>
<div style="position:absolute;left:335.30px;top:153.00px;width:79.00px;height:10.40px;background:#e8eaed;border-radius:5.2px;"></div>
<svg style="position:absolute;left:404.50px;top:156.60px;" width="5.4" height="3.2" viewBox="0 0 5.4 3.2"><path d="M0 0H5.4L2.7 3.2Z" fill="#000"/></svg>
<div style="position:absolute;left:427.70px;top:153.00px;width:79.00px;height:10.40px;background:#e8eaed;border-radius:5.2px;"></div>
<svg style="position:absolute;left:496.90px;top:156.60px;" width="5.4" height="3.2" viewBox="0 0 5.4 3.2"><path d="M0 0H5.4L2.7 3.2Z" fill="#000"/></svg>
<div style="position:absolute;left:520.20px;top:153.00px;width:79.00px;height:10.40px;background:#e8eaed;border-radius:5.2px;"></div>
<svg style="position:absolute;left:589.40px;top:156.60px;" width="5.4" height="3.2" viewBox="0 0 5.4 3.2"><path d="M0 0H5.4L2.7 3.2Z" fill="#000"/></svg>
<div style="position:absolute;left:612.60px;top:153.00px;width:79.00px;height:10.40px;background:#e8eaed;border-radius:5.2px;"></div>
<svg style="position:absolute;left:681.80px;top:156.60px;" width="5.4" height="3.2" viewBox="0 0 5.4 3.2"><path d="M0 0H5.4L2.7 3.2Z" fill="#000"/></svg>
<div style="position:absolute;left:705.10px;top:153.00px;width:79.00px;height:10.40px;background:#e8eaed;border-radius:5.2px;"></div>
<svg style="position:absolute;left:774.30px;top:156.60px;" width="5.4" height="3.2" viewBox="0 0 5.4 3.2"><path d="M0 0H5.4L2.7 3.2Z" fill="#000"/></svg>
<div style="position:absolute;left:243.00px;top:167.90px;width:79.00px;height:10.40px;background:#e8eaed;border-radius:5.2px;"></div>
<svg style="position:absolute;left:312.20px;top:171.50px;" width="5.4" height="3.2" viewBox="0 0 5.4 3.2"><path d="M0 0H5.4L2.7 3.2Z" fill="#000"/></svg>
<div style="position:absolute;left:335.30px;top:167.90px;width:79.00px;height:10.40px;background:#e8eaed;border-radius:5.2px;"></div>
<svg style="position:absolute;left:404.50px;top:171.50px;" width="5.4" height="3.2" viewBox="0 0 5.4 3.2"><path d="M0 0H5.4L2.7 3.2Z" fill="#000"/></svg>
<div style="position:absolute;left:427.70px;top:167.90px;width:79.00px;height:10.40px;background:#e8eaed;border-radius:5.2px;"></div>
<svg style="position:absolute;left:496.90px;top:171.50px;" width="5.4" height="3.2" viewBox="0 0 5.4 3.2"><path d="M0 0H5.4L2.7 3.2Z" fill="#000"/></svg>
<div style="position:absolute;left:520.20px;top:167.90px;width:79.00px;height:10.40px;background:#e8eaed;border-radius:5.2px;"></div>
<svg style="position:absolute;left:589.40px;top:171.50px;" width="5.4" height="3.2" viewBox="0 0 5.4 3.2"><path d="M0 0H5.4L2.7 3.2Z" fill="#000"/></svg>
<div style="position:absolute;left:612.60px;top:167.90px;width:79.00px;height:10.40px;background:#e8eaed;border-radius:5.2px;"></div>
<svg style="position:absolute;left:681.80px;top:171.50px;" width="5.4" height="3.2" viewBox="0 0 5.4 3.2"><path d="M0 0H5.4L2.7 3.2Z" fill="#000"/></svg>
<div style="position:absolute;left:705.10px;top:167.90px;width:79.00px;height:10.40px;background:#e8eaed;border-radius:5.2px;"></div>
<svg style="position:absolute;left:774.30px;top:171.50px;" width="5.4" height="3.2" viewBox="0 0 5.4 3.2"><path d="M0 0H5.4L2.7 3.2Z" fill="#000"/></svg>
<div style="position:absolute;left:243.00px;top:182.80px;width:79.00px;height:10.40px;background:#e8eaed;border-radius:5.2px;"></div>
<svg style="position:absolute;left:312.20px;top:186.40px;" width="5.4" height="3.2" viewBox="0 0 5.4 3.2"><path d="M0 0H5.4L2.7 3.2Z" fill="#000"/></svg>
<div style="position:absolute;left:335.30px;top:182.80px;width:79.00px;height:10.40px;background:#e8eaed;border-radius:5.2px;"></div>
<svg style="position:absolute;left:404.50px;top:186.40px;" width="5.4" height="3.2" viewBox="0 0 5.4 3.2"><path d="M0 0H5.4L2.7 3.2Z" fill="#000"/></svg>
<div style="position:absolute;left:427.70px;top:182.80px;width:79.00px;height:10.40px;background:#e8eaed;border-radius:5.2px;"></div>
<svg style="position:absolute;left:496.90px;top:186.40px;" width="5.4" height="3.2" viewBox="0 0 5.4 3.2"><path d="M0 0H5.4L2.7 3.2Z" fill="#000"/></svg>
<div style="position:absolute;left:520.20px;top:182.80px;width:79.00px;height:10.40px;background:#e8eaed;border-radius:5.2px;"></div>
<svg style="position:absolute;left:589.40px;top:186.40px;" width="5.4" height="3.2" viewBox="0 0 5.4 3.2"><path d="M0 0H5.4L2.7 3.2Z" fill="#000"/></svg>
<div style="position:absolute;left:612.60px;top:182.80px;width:79.00px;height:10.40px;background:#e8eaed;border-radius:5.2px;"></div>
<svg style="position:absolute;left:681.80px;top:186.40px;" width="5.4" height="3.2" viewBox="0 0 5.4 3.2"><path d="M0 0H5.4L2.7 3.2Z" fill="#000"/></svg>
<div style="position:absolute;left:705.10px;top:182.80px;width:79.00px;height:10.40px;background:#e8eaed;border-radius:5.2px;"></div>
<svg style="position:absolute;left:774.30px;top:186.40px;" width="5.4" height="3.2" viewBox="0 0 5.4 3.2"><path d="M0 0H5.4L2.7 3.2Z" fill="#000"/></svg>
<div style="position:absolute;left:243.00px;top:197.70px;width:79.00px;height:10.40px;background:#e8eaed;border-radius:5.2px;"></div>
<svg style="position:absolute;left:312.20px;top:201.30px;" width="5.4" height="3.2" viewBox="0 0 5.4 3.2"><path d="M0 0H5.4L2.7 3.2Z" fill="#000"/></svg>
<div style="position:absolute;left:335.30px;top:197.70px;width:79.00px;height:10.40px;background:#e8eaed;border-radius:5.2px;"></div>
<svg style="position:absolute;left:404.50px;top:201.30px;" width="5.4" height="3.2" viewBox="0 0 5.4 3.2"><path d="M0 0H5.4L2.7 3.2Z" fill="#000"/></svg>
<div style="position:absolute;left:427.70px;top:197.70px;width:79.00px;height:10.40px;background:#e8eaed;border-radius:5.2px;"></div>
<svg style="position:absolute;left:496.90px;top:201.30px;" width="5.4" height="3.2" viewBox="0 0 5.4 3.2"><path d="M0 0H5.4L2.7 3.2Z" fill="#000"/></svg>
<div style="position:absolute;left:520.20px;top:197.70px;width:79.00px;height:10.40px;background:#e8eaed;border-radius:5.2px;"></div>
<svg style="position:absolute;left:589.40px;top:201.30px;" width="5.4" height="3.2" viewBox="0 0 5.4 3.2"><path d="M0 0H5.4L2.7 3.2Z" fill="#000"/></svg>
<div style="position:absolute;left:612.60px;top:197.70px;width:79.00px;height:10.40px;background:#e8eaed;border-radius:5.2px;"></div>
<svg style="position:absolute;left:681.80px;top:201.30px;" width="5.4" height="3.2" viewBox="0 0 5.4 3.2"><path d="M0 0H5.4L2.7 3.2Z" fill="#000"/></svg>
<div style="position:absolute;left:705.10px;top:197.70px;width:79.00px;height:10.40px;background:#e8eaed;border-radius:5.2px;"></div>
<svg style="position:absolute;left:774.30px;top:201.30px;" width="5.4" height="3.2" viewBox="0 0 5.4 3.2"><path d="M0 0H5.4L2.7 3.2Z" fill="#000"/></svg>
<div style="position:absolute;left:243.00px;top:212.60px;width:79.00px;height:10.40px;background:#e8eaed;border-radius:5.2px;"></div>
<svg style="position:absolute;left:312.20px;top:216.20px;" width="5.4" height="3.2" viewBox="0 0 5.4 3.2"><path d="M0 0H5.4L2.7 3.2Z" fill="#000"/></svg>
<div style="position:absolute;left:335.30px;top:212.60px;width:79.00px;height:10.40px;background:#e8eaed;border-radius:5.2px;"></div>
<svg style="position:absolute;left:404.50px;top:216.20px;" width="5.4" height="3.2" viewBox="0 0 5.4 3.2"><path d="M0 0H5.4L2.7 3.2Z" fill="#000"/></svg>
<div style="position:absolute;left:427.70px;top:212.60px;width:79.00px;height:10.40px;background:#e8eaed;border-radius:5.2px;"></div>
<svg style="position:absolute;left:496.90px;top:216.20px;" width="5.4" height="3.2" viewBox="0 0 5.4 3.2"><path d="M0 0H5.4L2.7 3.2Z" fill="#000"/></svg>
<div style="position:absolute;left:520.20px;top:212.60px;width:79.00px;height:10.40px;background:#e8eaed;border-radius:5.2px;"></div>
<svg style="position:absolute;left:589.40px;top:216.20px;" width="5.4" height="3.2" viewBox="0 0 5.4 3.2"><path d="M0 0H5.4L2.7 3.2Z" fill="#000"/></svg>
<div style="position:absolute;left:612.60px;top:212.60px;width:79.00px;height:10.40px;background:#e8eaed;border-radius:5.2px;"></div>
<svg style="position:absolute;left:681.80px;top:216.20px;" width="5.4" height="3.2" viewBox="0 0 5.4 3.2"><path d="M0 0H5.4L2.7 3.2Z" fill="#000"/></svg>
<div style="position:absolute;left:705.10px;top:212.60px;width:79.00px;height:10.40px;background:#e8eaed;border-radius:5.2px;"></div>
<svg style="position:absolute;left:774.30px;top:216.20px;" width="5.4" height="3.2" viewBox="0 0 5.4 3.2"><path d="M0 0H5.4L2.7 3.2Z" fill="#000"/></svg>
<div style="position:absolute;left:243.00px;top:227.50px;width:79.00px;height:10.40px;background:#e8eaed;border-radius:5.2px;"></div>
<svg style="position:absolute;left:312.20px;top:231.10px;" width="5.4" height="3.2" viewBox="0 0 5.4 3.2"><path d="M0 0H5.4L2.7 3.2Z" fill="#000"/></svg>
<div style="position:absolute;left:335.30px;top:227.50px;width:79.00px;height:10.40px;background:#e8eaed;border-radius:5.2px;"></div>
<svg style="position:absolute;left:404.50px;top:231.10px;" width="5.4" height="3.2" viewBox="0 0 5.4 3.2"><path d="M0 0H5.4L2.7 3.2Z" fill="#000"/></svg>
<div style="position:absolute;left:427.70px;top:227.50px;width:79.00px;height:10.40px;background:#e8eaed;border-radius:5.2px;"></div>
<svg style="position:absolute;left:496.90px;top:231.10px;" width="5.4" height="3.2" viewBox="0 0 5.4 3.2"><path d="M0 0H5.4L2.7 3.2Z" fill="#000"/></svg>
<div style="position:absolute;left:520.20px;top:227.50px;width:79.00px;height:10.40px;background:#e8eaed;border-radius:5.2px;"></div>
<svg style="position:absolute;left:589.40px;top:231.10px;" width="5.4" height="3.2" viewBox="0 0 5.4 3.2"><path d="M0 0H5.4L2.7 3.2Z" fill="#000"/></svg>
<div style="position:absolute;left:612.60px;top:227.50px;width:79.00px;height:10.40px;background:#e8eaed;border-radius:5.2px;"></div>
<svg style="position:absolute;left:681.80px;top:231.10px;" width="5.4" height="3.2" viewBox="0 0 5.4 3.2"><path d="M0 0H5.4L2.7 3.2Z" fill="#000"/></svg>
<div style="position:absolute;left:705.10px;top:227.50px;width:79.00px;height:10.40px;background:#e8eaed;border-radius:5.2px;"></div>
<svg style="position:absolute;left:774.30px;top:231.10px;" width="5.4" height="3.2" viewBox="0 0 5.4 3.2"><path d="M0 0H5.4L2.7 3.2Z" fill="#000"/></svg>
<div style="position:absolute;left:243.00px;top:242.40px;width:79.00px;height:10.40px;background:#e8eaed;border-radius:5.2px;"></div>
<svg style="position:absolute;left:312.20px;top:246.00px;" width="5.4" height="3.2" viewBox="0 0 5.4 3.2"><path d="M0 0H5.4L2.7 3.2Z" fill="#000"/></svg>
<div style="position:absolute;left:335.30px;top:242.40px;width:79.00px;height:10.40px;background:#e8eaed;border-radius:5.2px;"></div>
<svg style="position:absolute;left:404.50px;top:246.00px;" width="5.4" height="3.2" viewBox="0 0 5.4 3.2"><path d="M0 0H5.4L2.7 3.2Z" fill="#000"/></svg>
<div style="position:absolute;left:427.70px;top:242.40px;width:79.00px;height:10.40px;background:#e8eaed;border-radius:5.2px;"></div>
<svg style="position:absolute;left:496.90px;top:246.00px;" width="5.4" height="3.2" viewBox="0 0 5.4 3.2"><path d="M0 0H5.4L2.7 3.2Z" fill="#000"/></svg>
<div style="position:absolute;left:520.20px;top:242.40px;width:79.00px;height:10.40px;background:#e8eaed;border-radius:5.2px;"></div>
<svg style="position:absolute;left:589.40px;top:246.00px;" width="5.4" height="3.2" viewBox="0 0 5.4 3.2"><path d="M0 0H5.4L2.7 3.2Z" fill="#000"/></svg>
<div style="position:absolute;left:612.60px;top:242.40px;width:79.00px;height:10.40px;background:#e8eaed;border-radius:5.2px;"></div>
<svg style="position:absolute;left:681.80px;top:246.00px;" width="5.4" height="3.2" viewBox="0 0 5.4 3.2"><path d="M0 0H5.4L2.7 3.2Z" fill="#000"/></svg>
<div style="position:absolute;left:705.10px;top:242.40px;width:79.00px;height:10.40px;background:#e8eaed;border-radius:5.2px;"></div>
<svg style="position:absolute;left:774.30px;top:246.00px;" width="5.4" height="3.2" viewBox="0 0 5.4 3.2"><path d="M0 0H5.4L2.7 3.2Z" fill="#000"/></svg>
<div style="position:absolute;left:243.00px;top:257.30px;width:79.00px;height:10.40px;background:#e8eaed;border-radius:5.2px;"></div>
<svg style="position:absolute;left:312.20px;top:260.90px;" width="5.4" height="3.2" viewBox="0 0 5.4 3.2"><path d="M0 0H5.4L2.7 3.2Z" fill="#000"/></svg>
<div style="position:absolute;left:335.30px;top:257.30px;width:79.00px;height:10.40px;background:#e8eaed;border-radius:5.2px;"></div>
<svg style="position:absolute;left:404.50px;top:260.90px;" width="5.4" height="3.2" viewBox="0 0 5.4 3.2"><path d="M0 0H5.4L2.7 3.2Z" fill="#000"/></svg>
<div style="position:absolute;left:427.70px;top:257.30px;width:79.00px;height:10.40px;background:#e8eaed;border-radius:5.2px;"></div>
<svg style="position:absolute;left:496.90px;top:260.90px;" width="5.4" height="3.2" viewBox="0 0 5.4 3.2"><path d="M0 0H5.4L2.7 3.2Z" fill="#000"/></svg>
<div style="position:absolute;left:520.20px;top:257.30px;width:79.00px;height:10.40px;background:#e8eaed;border-radius:5.2px;"></div>
<svg style="position:absolute;left:589.40px;top:260.90px;" width="5.4" height="3.2" viewBox="0 0 5.4 3.2"><path d="M0 0H5.4L2.7 3.2Z" fill="#000"/></svg>
<div style="position:absolute;left:612.60px;top:257.30px;width:79.00px;height:10.40px;background:#e8eaed;border-radius:5.2px;"></div>
<svg style="position:absolute;left:681.80px;top:260.90px;" width="5.4" height="3.2" viewBox="0 0 5.4 3.2"><path d="M0 0H5.4L2.7 3.2Z" fill="#000"/></svg>
<div style="position:absolute;left:705.10px;top:257.30px;width:79.00px;height:10.40px;background:#e8eaed;border-radius:5.2px;"></div>
<svg style="position:absolute;left:774.30px;top:260.90px;" width="5.4" height="3.2" viewBox="0 0 5.4 3.2"><path d="M0 0H5.4L2.7 3.2Z" fill="#000"/></svg>
<div style="position:absolute;left:243.00px;top:272.20px;width:79.00px;height:10.40px;background:#e8eaed;border-radius:5.2px;"></div>
<svg style="position:absolute;left:312.20px;top:275.80px;" width="5.4" height="3.2" viewBox="0 0 5.4 3.2"><path d="M0 0H5.4L2.7 3.2Z" fill="#000"/></svg>
<div style="position:absolute;left:335.30px;top:272.20px;width:79.00px;height:10.40px;background:#e8eaed;border-radius:5.2px;"></div>
<svg style="position:absolute;left:404.50px;top:275.80px;" width="5.4" height="3.2" viewBox="0 0 5.4 3.2"><path d="M0 0H5.4L2.7 3.2Z" fill="#000"/></svg>
<div style="position:absolute;left:427.70px;top:272.20px;width:79.00px;height:10.40px;background:#e8eaed;border-radius:5.2px;"></div>
<svg style="position:absolute;left:496.90px;top:275.80px;" width="5.4" height="3.2" viewBox="0 0 5.4 3.2"><path d="M0 0H5.4L2.7 3.2Z" fill="#000"/></svg>
<div style="position:absolute;left:520.20px;top:272.20px;width:79.00px;height:10.40px;background:#e8eaed;border-radius:5.2px;"></div>
<svg style="position:absolute;left:589.40px;top:275.80px;" width="5.4" height="3.2" viewBox="0 0 5.4 3.2"><path d="M0 0H5.4L2.7 3.2Z" fill="#000"/></svg>
<div style="position:absolute;left:612.60px;top:272.20px;width:79.00px;height:10.40px;background:#e8eaed;border-radius:5.2px;"></div>
<svg style="position:absolute;left:681.80px;top:275.80px;" width="5.4" height="3.2" viewBox="0 0 5.4 3.2"><path d="M0 0H5.4L2.7 3.2Z" fill="#000"/></svg>
<div style="position:absolute;left:705.10px;top:272.20px;width:79.00px;height:10.40px;background:#e8eaed;border-radius:5.2px;"></div>
<svg style="position:absolute;left:774.30px;top:275.80px;" width="5.4" height="3.2" viewBox="0 0 5.4 3.2"><path d="M0 0H5.4L2.7 3.2Z" fill="#000"/></svg>
<div style="position:absolute;left:243.00px;top:287.10px;width:79.00px;height:10.40px;background:#e8eaed;border-radius:5.2px;"></div>
<svg style="position:absolute;left:312.20px;top:290.70px;" width="5.4" height="3.2" viewBox="0 0 5.4 3.2"><path d="M0 0H5.4L2.7 3.2Z" fill="#000"/></svg>
<div style="position:absolute;left:335.30px;top:287.10px;width:79.00px;height:10.40px;background:#e8eaed;border-radius:5.2px;"></div>
<svg style="position:absolute;left:404.50px;top:290.70px;" width="5.4" height="3.2" viewBox="0 0 5.4 3.2"><path d="M0 0H5.4L2.7 3.2Z" fill="#000"/></svg>
<div style="position:absolute;left:427.70px;top:287.10px;width:79.00px;height:10.40px;background:#e8eaed;border-radius:5.2px;"></div>
<svg style="position:absolute;left:496.90px;top:290.70px;" width="5.4" height="3.2" viewBox="0 0 5.4 3.2"><path d="M0 0H5.4L2.7 3.2Z" fill="#000"/></svg>
<div style="position:absolute;left:520.20px;top:287.10px;width:79.00px;height:10.40px;background:#e8eaed;border-radius:5.2px;"></div>
<svg style="position:absolute;left:589.40px;top:290.70px;" width="5.4" height="3.2" viewBox="0 0 5.4 3.2"><path d="M0 0H5.4L2.7 3.2Z" fill="#000"/></svg>
<div style="position:absolute;left:612.60px;top:287.10px;width:79.00px;height:10.40px;background:#e8eaed;border-radius:5.2px;"></div>
<svg style="position:absolute;left:681.80px;top:290.70px;" width="5.4" height="3.2" viewBox="0 0 5.4 3.2"><path d="M0 0H5.4L2.7 3.2Z" fill="#000"/></svg>
<div style="position:absolute;left:705.10px;top:287.10px;width:79.00px;height:10.40px;background:#e8eaed;border-radius:5.2px;"></div>
<svg style="position:absolute;left:774.30px;top:290.70px;" width="5.4" height="3.2" viewBox="0 0 5.4 3.2"><path d="M0 0H5.4L2.7 3.2Z" fill="#000"/></svg>
<div style="position:absolute;left:243.00px;top:302.00px;width:79.00px;height:10.40px;background:#e8eaed;border-radius:5.2px;"></div>
<svg style="position:absolute;left:312.20px;top:305.60px;" width="5.4" height="3.2" viewBox="0 0 5.4 3.2"><path d="M0 0H5.4L2.7 3.2Z" fill="#000"/></svg>
<div style="position:absolute;left:335.30px;top:302.00px;width:79.00px;height:10.40px;background:#e8eaed;border-radius:5.2px;"></div>
<svg style="position:absolute;left:404.50px;top:305.60px;" width="5.4" height="3.2" viewBox="0 0 5.4 3.2"><path d="M0 0H5.4L2.7 3.2Z" fill="#000"/></svg>
<div style="position:absolute;left:427.70px;top:302.00px;width:79.00px;height:10.40px;background:#e8eaed;border-radius:5.2px;"></div>
<svg style="position:absolute;left:496.90px;top:305.60px;" width="5.4" height="3.2" viewBox="0 0 5.4 3.2"><path d="M0 0H5.4L2.7 3.2Z" fill="#000"/></svg>
<div style="position:absolute;left:520.20px;top:302.00px;width:79.00px;height:10.40px;background:#e8eaed;border-radius:5.2px;"></div>
<svg style="position:absolute;left:589.40px;top:305.60px;" width="5.4" height="3.2" viewBox="0 0 5.4 3.2"><path d="M0 0H5.4L2.7 3.2Z" fill="#000"/></svg>
<div style="position:absolute;left:612.60px;top:302.00px;width:79.00px;height:10.40px;background:#e8eaed;border-radius:5.2px;"></div>
<svg style="position:absolute;left:681.80px;top:305.60px;" width="5.4" height="3.2" viewBox="0 0 5.4 3.2"><path d="M0 0H5.4L2.7 3.2Z" fill="#000"/></svg>
<div style="position:absolute;left:705.10px;top:302.00px;width:79.00px;height:10.40px;background:#e8eaed;border-radius:5.2px;"></div>
<svg style="position:absolute;left:774.30px;top:305.60px;" width="5.4" height="3.2" viewBox="0 0 5.4 3.2"><path d="M0 0H5.4L2.7 3.2Z" fill="#000"/></svg>
<div style="position:absolute;left:243.00px;top:316.90px;width:79.00px;height:10.40px;background:#e8eaed;border-radius:5.2px;"></div>
<svg style="position:absolute;left:312.20px;top:320.50px;" width="5.4" height="3.2" viewBox="0 0 5.4 3.2"><path d="M0 0H5.4L2.7 3.2Z" fill="#000"/></svg>
<div style="position:absolute;left:335.30px;top:316.90px;width:79.00px;height:10.40px;background:#e8eaed;border-radius:5.2px;"></div>
<svg style="position:absolute;left:404.50px;top:320.50px;" width="5.4" height="3.2" viewBox="0 0 5.4 3.2"><path d="M0 0H5.4L2.7 3.2Z" fill="#000"/></svg>
<div style="position:absolute;left:427.70px;top:316.90px;width:79.00px;height:10.40px;background:#e8eaed;border-radius:5.2px;"></div>
<svg style="position:absolute;left:496.90px;top:320.50px;" width="5.4" height="3.2" viewBox="0 0 5.4 3.2"><path d="M0 0H5.4L2.7 3.2Z" fill="#000"/></svg>
<div style="position:absolute;left:520.20px;top:316.90px;width:79.00px;height:10.40px;background:#e8eaed;border-radius:5.2px;"></div>
<svg style="position:absolute;left:589.40px;top:320.50px;" width="5.4" height="3.2" viewBox="0 0 5.4 3.2"><path d="M0 0H5.4L2.7 3.2Z" fill="#000"/></svg>
<div style="position:absolute;left:612.60px;top:316.90px;width:79.00px;height:10.40px;background:#e8eaed;border-radius:5.2px;"></div>
<svg style="position:absolute;left:681.80px;top:320.50px;" width="5.4" height="3.2" viewBox="0 0 5.4 3.2"><path d="M0 0H5.4L2.7 3.2Z" fill="#000"/></svg>
<div style="position:absolute;left:705.10px;top:316.90px;width:79.00px;height:10.40px;background:#e8eaed;border-radius:5.2px;"></div>
<svg style="position:absolute;left:774.30px;top:320.50px;" width="5.4" height="3.2" viewBox="0 0 5.4 3.2"><path d="M0 0H5.4L2.7 3.2Z" fill="#000"/></svg>
<div style="position:absolute;left:243.00px;top:331.80px;width:79.00px;height:10.40px;background:#e8eaed;border-radius:5.2px;"></div>
<svg style="position:absolute;left:312.20px;top:335.40px;" width="5.4" height="3.2" viewBox="0 0 5.4 3.2"><path d="M0 0H5.4L2.7 3.2Z" fill="#000"/></svg>
<div style="position:absolute;left:335.30px;top:331.80px;width:79.00px;height:10.40px;background:#e8eaed;border-radius:5.2px;"></div>
<svg style="position:absolute;left:404.50px;top:335.40px;" width="5.4" height="3.2" viewBox="0 0 5.4 3.2"><path d="M0 0H5.4L2.7 3.2Z" fill="#000"/></svg>
<div style="position:absolute;left:427.70px;top:331.80px;width:79.00px;height:10.40px;background:#e8eaed;border-radius:5.2px;"></div>
<svg style="position:absolute;left:496.90px;top:335.40px;" width="5.4" height="3.2" viewBox="0 0 5.4 3.2"><path d="M0 0H5.4L2.7 3.2Z" fill="#000"/></svg>
<div style="position:absolute;left:520.20px;top:331.80px;width:79.00px;height:10.40px;background:#e8eaed;border-radius:5.2px;"></div>
<svg style="position:absolute;left:589.40px;top:335.40px;" width="5.4" height="3.2" viewBox="0 0 5.4 3.2"><path d="M0 0H5.4L2.7 3.2Z" fill="#000"/></svg>
<div style="position:absolute;left:612.60px;top:331.80px;width:79.00px;height:10.40px;background:#e8eaed;border-radius:5.2px;"></div>
<svg style="position:absolute;left:681.80px;top:335.40px;" width="5.4" height="3.2" viewBox="0 0 5.4 3.2"><path d="M0 0H5.4L2.7 3.2Z" fill="#000"/></svg>
<div style="position:absolute;left:705.10px;top:331.80px;width:79.00px;height:10.40px;background:#e8eaed;border-radius:5.2px;"></div>
<svg style="position:absolute;left:774.30px;top:335.40px;" width="5.4" height="3.2" viewBox="0 0 5.4 3.2"><path d="M0 0H5.4L2.7 3.2Z" fill="#000"/></svg>
<div style="position:absolute;left:243.00px;top:346.70px;width:79.00px;height:10.40px;background:#e8eaed;border-radius:5.2px;"></div>
<svg style="position:absolute;left:312.20px;top:350.30px;" width="5.4" height="3.2" viewBox="0 0 5.4 3.2"><path d="M0 0H5.4L2.7 3.2Z" fill="#000"/></svg>
<div style="position:absolute;left:335.30px;top:346.70px;width:79.00px;height:10.40px;background:#e8eaed;border-radius:5.2px;"></div>
<svg style="position:absolute;left:404.50px;top:350.30px;" width="5.4" height="3.2" viewBox="0 0 5.4 3.2"><path d="M0 0H5.4L2.7 3.2Z" fill="#000"/></svg>
<div style="position:absolute;left:427.70px;top:346.70px;width:79.00px;height:10.40px;background:#e8eaed;border-radius:5.2px;"></div>
<svg style="position:absolute;left:496.90px;top:350.30px;" width="5.4" height="3.2" viewBox="0 0 5.4 3.2"><path d="M0 0H5.4L2.7 3.2Z" fill="#000"/></svg>
<div style="position:absolute;left:520.20px;top:346.70px;width:79.00px;height:10.40px;background:#e8eaed;border-radius:5.2px;"></div>
<svg style="position:absolute;left:589.40px;top:350.30px;" width="5.4" height="3.2" viewBox="0 0 5.4 3.2"><path d="M0 0H5.4L2.7 3.2Z" fill="#000"/></svg>
<div style="position:absolute;left:612.60px;top:346.70px;width:79.00px;height:10.40px;background:#e8eaed;border-radius:5.2px;"></div>
<svg style="position:absolute;left:681.80px;top:350.30px;" width="5.4" height="3.2" viewBox="0 0 5.4 3.2"><path d="M0 0H5.4L2.7 3.2Z" fill="#000"/></svg>
<div style="position:absolute;left:705.10px;top:346.70px;width:79.00px;height:10.40px;background:#e8eaed;border-radius:5.2px;"></div>
<svg style="position:absolute;left:774.30px;top:350.30px;" width="5.4" height="3.2" viewBox="0 0 5.4 3.2"><path d="M0 0H5.4L2.7 3.2Z" fill="#000"/></svg>
<div style="position:absolute;left:243.00px;top:361.60px;width:79.00px;height:10.40px;background:#e8eaed;border-radius:5.2px;"></div>
<svg style="position:absolute;left:312.20px;top:365.20px;" width="5.4" height="3.2" viewBox="0 0 5.4 3.2"><path d="M0 0H5.4L2.7 3.2Z" fill="#000"/></svg>
<div style="position:absolute;left:335.30px;top:361.60px;width:79.00px;height:10.40px;background:#e8eaed;border-radius:5.2px;"></div>
<svg style="position:absolute;left:404.50px;top:365.20px;" width="5.4" height="3.2" viewBox="0 0 5.4 3.2"><path d="M0 0H5.4L2.7 3.2Z" fill="#000"/></svg>
<div style="position:absolute;left:427.70px;top:361.60px;width:79.00px;height:10.40px;background:#e8eaed;border-radius:5.2px;"></div>
<svg style="position:absolute;left:496.90px;top:365.20px;" width="5.4" height="3.2" viewBox="0 0 5.4 3.2"><path d="M0 0H5.4L2.7 3.2Z" fill="#000"/></svg>
<div style="position:absolute;left:520.20px;top:361.60px;width:79.00px;height:10.40px;background:#e8eaed;border-radius:5.2px;"></div>
<svg style="position:absolute;left:589.40px;top:365.20px;" width="5.4" height="3.2" viewBox="0 0 5.4 3.2"><path d="M0 0H5.4L2.7 3.2Z" fill="#000"/></svg>
<div style="position:absolute;left:612.60px;top:361.60px;width:79.00px;height:10.40px;background:#e8eaed;border-radius:5.2px;"></div>
<svg style="position:absolute;left:681.80px;top:365.20px;" width="5.4" height="3.2" viewBox="0 0 5.4 3.2"><path d="M0 0H5.4L2.7 3.2Z" fill="#000"/></svg>
<div style="position:absolute;left:705.10px;top:361.60px;width:79.00px;height:10.40px;background:#e8eaed;border-radius:5.2px;"></div>
<svg style="position:absolute;left:774.30px;top:365.20px;" width="5.4" height="3.2" viewBox="0 0 5.4 3.2"><path d="M0 0H5.4L2.7 3.2Z" fill="#000"/></svg>
<div style="position:absolute;left:243.00px;top:376.50px;width:79.00px;height:10.40px;background:#e8eaed;border-radius:5.2px;"></div>
<svg style="position:absolute;left:312.20px;top:380.10px;" width="5.4" height="3.2" viewBox="0 0 5.4 3.2"><path d="M0 0H5.4L2.7 3.2Z" fill="#000"/></svg>
<div style="position:absolute;left:335.30px;top:376.50px;width:79.00px;height:10.40px;background:#e8eaed;border-radius:5.2px;"></div>
<svg style="position:absolute;left:404.50px;top:380.10px;" width="5.4" height="3.2" viewBox="0 0 5.4 3.2"><path d="M0 0H5.4L2.7 3.2Z" fill="#000"/></svg>
<div style="position:absolute;left:427.70px;top:376.50px;width:79.00px;height:10.40px;background:#e8eaed;border-radius:5.2px;"></div>
<svg style="position:absolute;left:496.90px;top:380.10px;" width="5.4" height="3.2" viewBox="0 0 5.4 3.2"><path d="M0 0H5.4L2.7 3.2Z" fill="#000"/></svg>
<div style="position:absolute;left:520.20px;top:376.50px;width:79.00px;height:10.40px;background:#e8eaed;border-radius:5.2px;"></div>
<svg style="position:absolute;left:589.40px;top:380.10px;" width="5.4" height="3.2" viewBox="0 0 5.4 3.2"><path d="M0 0H5.4L2.7 3.2Z" fill="#000"/></svg>
<div style="position:absolute;left:612.60px;top:376.50px;width:79.00px;height:10.40px;background:#e8eaed;border-radius:5.2px;"></div>
<svg style="position:absolute;left:681.80px;top:380.10px;" width="5.4" height="3.2" viewBox="0 0 5.4 3.2"><path d="M0 0H5.4L2.7 3.2Z" fill="#000"/></svg>
<div style="position:absolute;left:705.10px;top:376.50px;width:79.00px;height:10.40px;background:#e8eaed;border-radius:5.2px;"></div>
<svg style="position:absolute;left:774.30px;top:380.10px;" width="5.4" height="3.2" viewBox="0 0 5.4 3.2"><path d="M0 0H5.4L2.7 3.2Z" fill="#000"/></svg>
<div style="position:absolute;left:243.00px;top:391.40px;width:79.00px;height:10.40px;background:#e8eaed;border-radius:5.2px;"></div>
<svg style="position:absolute;left:312.20px;top:395.00px;" width="5.4" height="3.2" viewBox="0 0 5.4 3.2"><path d="M0 0H5.4L2.7 3.2Z" fill="#000"/></svg>
<div style="position:absolute;left:335.30px;top:391.40px;width:79.00px;height:10.40px;background:#e8eaed;border-radius:5.2px;"></div>
<svg style="position:absolute;left:404.50px;top:395.00px;" width="5.4" height="3.2" viewBox="0 0 5.4 3.2"><path d="M0 0H5.4L2.7 3.2Z" fill="#000"/></svg>
<div style="position:absolute;left:427.70px;top:391.40px;width:79.00px;height:10.40px;background:#e8eaed;border-radius:5.2px;"></div>
<svg style="position:absolute;left:496.90px;top:395.00px;" width="5.4" height="3.2" viewBox="0 0 5.4 3.2"><path d="M0 0H5.4L2.7 3.2Z" fill="#000"/></svg>
<div style="position:absolute;left:520.20px;top:391.40px;width:79.00px;height:10.40px;background:#e8eaed;border-radius:5.2px;"></div>
<svg style="position:absolute;left:589.40px;top:395.00px;" width="5.4" height="3.2" viewBox="0 0 5.4 3.2"><path d="M0 0H5.4L2.7 3.2Z" fill="#000"/></svg>
<div style="position:absolute;left:612.60px;top:391.40px;width:79.00px;height:10.40px;background:#e8eaed;border-radius:5.2px;"></div>
<svg style="position:absolute;left:681.80px;top:395.00px;" width="5.4" height="3.2" viewBox="0 0 5.4 3.2"><path d="M0 0H5.4L2.7 3.2Z" fill="#000"/></svg>
<div style="position:absolute;left:705.10px;top:391.40px;width:79.00px;height:10.40px;background:#e8eaed;border-radius:5.2px;"></div>
<svg style="position:absolute;left:774.30px;top:395.00px;" width="5.4" height="3.2" viewBox="0 0 5.4 3.2"><path d="M0 0H5.4L2.7 3.2Z" fill="#000"/></svg>
<div style="position:absolute;left:1015.30px;top:101.00px;width:8.70px;height:357.40px;background:#ffffff;"></div>
<div style="position:absolute;left:1015.30px;top:101.00px;width:8.70px;height:45.50px;background:#f8f9fa;"></div>
<div style="position:absolute;left:1015.00px;top:101.00px;width:0.60px;height:357.40px;background:#e1e3e1;"></div>
<div style="position:absolute;left:1015.60px;top:146.50px;width:8.40px;height:3.80px;background:#dde3ea;"></div>
<div style="position:absolute;left:1017.00px;top:151.70px;width:6.00px;height:18.00px;background:#dadce0;border-radius:3px;"></div>
<div style="position:absolute;left:1015.60px;top:436.00px;width:8.40px;height:22.40px;background:#f8f9fa;"></div>
<div style="position:absolute;left:1015.60px;top:436.00px;width:8.40px;height:0.60px;background:#eceef0;"></div>
<div style="position:absolute;left:1015.60px;top:447.10px;width:8.40px;height:0.60px;background:#eceef0;"></div>
<svg style="position:absolute;left:1018.20px;top:440.30px;" width="4.2" height="2.2" viewBox="0 0 5 2.6"><path d="M0 2.6H5L2.5 0Z" fill="#8d9094"/></svg>
<svg style="position:absolute;left:1018.2px;top:451.6px" width="4.2" height="2.2" viewBox="0 0 5 2.6"><path d="M0 0H5L2.5 2.6Z" fill="#8d9094"/></svg>
<div style="position:absolute;left:0.00px;top:458.40px;width:1024.00px;height:9.00px;background:#ffffff;"></div>
<div style="position:absolute;left:0.00px;top:458.40px;width:33.00px;height:9.00px;background:#f3f3f3;"></div>
<div style="position:absolute;left:0.00px;top:458.20px;width:1024.00px;height:0.80px;background:#eeeff0;"></div>
<div style="position:absolute;left:992.60px;top:458.80px;width:22.40px;height:8.60px;background:#f8f9fa;"></div>
<div style="position:absolute;left:1015.60px;top:458.80px;width:8.40px;height:8.60px;background:#f3f3f3;"></div>
<svg style="position:absolute;left:996.90px;top:461.00px;" width="2.2" height="4.2" viewBox="0 0 2.6 5"><path d="M2.6 0V5L0 2.5Z" fill="#8d9094"/></svg>
<div style="position:absolute;left:1003.90px;top:458.80px;width:0.60px;height:8.60px;background:#eceef0;"></div>
<div style="position:absolute;left:992.60px;top:458.80px;width:0.60px;height:8.60px;background:#eceef0;"></div>
<svg style="position:absolute;left:1009.00px;top:461.00px;" width="2.2" height="4.2" viewBox="0 0 2.6 5"><path d="M0 0V5L2.6 2.5Z" fill="#8d9094"/></svg>
<div style="position:absolute;left:0.00px;top:467.00px;width:1024.00px;height:1.80px;background:#eceef0;"></div>
<div style="position:absolute;left:0.00px;top:468.80px;width:1024.00px;height:25.20px;background:#f9fbfd;"></div>
<div style="position:absolute;left:303.10px;top:468.00px;width:61.70px;height:26.00px;background:#e1e9f7;"></div>
<svg style="position:absolute;left:40.00px;top:478.00px;" width="7.5" height="7.5" viewBox="0 0 15 15"><path d="M7.5 0V15M0 7.5H15" stroke="#444746" stroke-width="1.9"/></svg>
<svg style="position:absolute;left:67.00px;top:478.30px;" width="10.3" height="7" viewBox="0 0 20.6 14"><path d="M0 1.2H20.6M0 7H20.6M0 12.8H20.6" stroke="#444746" stroke-width="2.2"/></svg>
<div style="position:absolute;left:104.60px;top:477.09px;font:normal 11px/11px 'Liberation Sans', sans-serif;color:#444746;white-space:nowrap;-webkit-text-stroke:0.2px #444746;">Karta Projektu</div>
<div style="position:absolute;left:206.70px;top:477.09px;font:normal 11px/11px 'Liberation Sans', sans-serif;color:#444746;white-space:nowrap;-webkit-text-stroke:0.2px #444746;">Lista kontaków</div>
<div style="position:absolute;left:373.70px;top:477.09px;font:normal 11px/11px 'Liberation Sans', sans-serif;color:#444746;white-space:nowrap;-webkit-text-stroke:0.2px #444746;">Zakres</div>
<div style="position:absolute;left:438.50px;top:477.09px;font:normal 11px/11px 'Liberation Sans', sans-serif;color:#444746;white-space:nowrap;-webkit-text-stroke:0.2px #444746;">Harmonogram</div>
<div style="position:absolute;left:540.20px;top:477.09px;font:normal 11px/11px 'Liberation Sans', sans-serif;color:#444746;white-space:nowrap;-webkit-text-stroke:0.2px #444746;">Budżet</div>
<div style="position:absolute;left:606.20px;top:477.09px;font:normal 11px/11px 'Liberation Sans', sans-serif;color:#444746;white-space:nowrap;-webkit-text-stroke:0.2px #444746;">Rejestr ryzyka</div>
<div style="position:absolute;left:707.80px;top:477.09px;font:normal 11px/11px 'Liberation Sans', sans-serif;color:#444746;white-space:nowrap;-webkit-text-stroke:0.2px #444746;">Rejest zmian</div>
<div style="position:absolute;left:801.90px;top:477.09px;font:normal 11px/11px 'Liberation Sans', sans-serif;color:#444746;white-space:nowrap;-webkit-text-stroke:0.2px #444746;">Stat</div>
<svg style="position:absolute;left:183.15px;top:480.50px;" width="5.5" height="3" viewBox="0 0 5.5 3"><path d="M0 0H5.5L2.75 3Z" fill="#444746"/></svg>
<svg style="position:absolute;left:288.75px;top:480.50px;" width="5.5" height="3" viewBox="0 0 5.5 3"><path d="M0 0H5.5L2.75 3Z" fill="#444746"/></svg>
<svg style="position:absolute;left:414.85px;top:480.50px;" width="5.5" height="3" viewBox="0 0 5.5 3"><path d="M0 0H5.5L2.75 3Z" fill="#444746"/></svg>
<svg style="position:absolute;left:515.95px;top:480.50px;" width="5.5" height="3" viewBox="0 0 5.5 3"><path d="M0 0H5.5L2.75 3Z" fill="#444746"/></svg>
<svg style="position:absolute;left:582.55px;top:480.50px;" width="5.5" height="3" viewBox="0 0 5.5 3"><path d="M0 0H5.5L2.75 3Z" fill="#444746"/></svg>
<svg style="position:absolute;left:684.25px;top:480.50px;" width="5.5" height="3" viewBox="0 0 5.5 3"><path d="M0 0H5.5L2.75 3Z" fill="#444746"/></svg>
<svg style="position:absolute;left:778.15px;top:480.50px;" width="5.5" height="3" viewBox="0 0 5.5 3"><path d="M0 0H5.5L2.75 3Z" fill="#444746"/></svg>
<div style="position:absolute;left:311.50px;top:477.94px;font:bold 10px/10px 'Liberation Sans', sans-serif;color:#0b57d0;white-space:nowrap;letter-spacing:0px;">RASCI</div>
<svg style="position:absolute;left:351.25px;top:480.50px;" width="5.5" height="3" viewBox="0 0 5.5 3"><path d="M0 0H5.5L2.75 3Z" fill="#0b57d0"/></svg>
<div style="position:absolute;left:822.00px;top:474.60px;width:0.80px;height:13.40px;background:#c7c7c7;"></div>
<svg style="position:absolute;left:836.50px;top:477.80px;" width="5" height="8" viewBox="0 0 10 16"><path d="M8.5 1.5L2 8l6.5 6.5" fill="none" stroke="#c4c7c5" stroke-width="2"/></svg>
<svg style="position:absolute;left:865.30px;top:477.80px;" width="5" height="8" viewBox="0 0 10 16"><path d="M1.5 1.5L8 8l-6.5 6.5" fill="none" stroke="#444746" stroke-width="2.2"/></svg>
<svg style="position:absolute;left:956.50px;top:475.00px;" width="14" height="15" viewBox="0 0 28 30"><path d="M4 0H24A4 4 0 0 1 28 4V22A4 4 0 0 1 24 26H17L14 30 11 26H4A4 4 0 0 1 0 22V4A4 4 0 0 1 4 0Z" fill="#55585b"/><path d="M14 5Q15 12 21 13Q15 14 14 21Q13 14 7 13Q13 12 14 5Z" fill="#fff"/></svg>
<svg style="position:absolute;left:1001.40px;top:478.80px;" width="5" height="7.5" viewBox="0 0 10 15"><path d="M8.5 1.5L2.5 7.5l6 6" fill="none" stroke="#444746" stroke-width="2.4"/></svg>
<svg style="position:absolute;left:0.00px;top:484.00px;" width="12" height="10" viewBox="0 0 12 10"><path d="M0 4Q1 9 5.5 10H0Z" fill="#101010"/><path d="M0 4Q1 9 5.5 10" fill="none" stroke="#fff" stroke-width="1" opacity=".7"/></svg>
<svg style="position:absolute;left:1012.00px;top:484.00px;" width="12" height="10" viewBox="0 0 12 10"><path d="M12 4.5Q11 9 6.5 10H12Z" fill="#101010"/><path d="M12 4.5Q11 9 6.5 10" fill="none" stroke="#fff" stroke-width="1" opacity=".7"/></svg>
</div></body></html>
